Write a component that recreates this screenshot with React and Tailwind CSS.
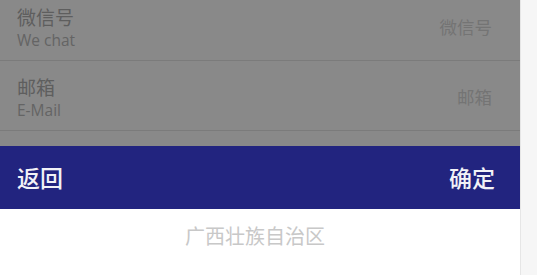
import React from "react";

const font = { fontFamily: '"Noto Sans CJK SC", "Noto Sans", sans-serif' };

function Row({ label, sub, value, first }) {
  return (
    <div
      className={`flex items-start justify-between border-b border-[#7b7b7b] pl-[17px] pr-[28px] ${
        first ? "h-[70px] mt-[-9px]" : "h-[70px]"
      }`}
    >
      <div className="flex flex-col pt-[14px]">
        <span className="text-[19px] leading-[24px] text-[#5e5e5e]">{label}</span>
        <span
          className="mt-[1px] text-[15.5px] leading-[20px] text-[#646464]"
          style={{ fontFamily: '"Open Sans", "Noto Sans CJK SC", sans-serif' }}
        >
          {sub}
        </span>
      </div>
      <span className="pt-[25px] text-[17.5px] leading-[22px] text-[#747474]">{value}</span>
    </div>
  );
}

export default function App() {
  return (
    <div className="flex h-[275px] w-[537px] overflow-hidden" style={font}>
      <div className="flex w-[520px] flex-col">
        <div className="h-[146px] overflow-hidden bg-[#898989]">
          <Row label="微信号" sub="We chat" value="微信号" first />
          <Row label="邮箱" sub="E-Mail" value="邮箱" />
        </div>
        <div className="flex h-[63px] items-center justify-between bg-[#22247f] pl-[17px] pr-[25px] text-[23px] font-medium text-[#f2f2f7]">
          <span>返回</span>
          <span>确定</span>
        </div>
        <div className="flex flex-1 justify-center bg-white pt-[15px] pr-[10px]">
          <span className="text-[20px] leading-[24px] text-[#c8c8c8]">广西壮族自治区</span>
        </div>
      </div>
      <div className="w-[17px] border-l border-[#e6e6e6] bg-[#f6f6f6]" />
    </div>
  );
}
